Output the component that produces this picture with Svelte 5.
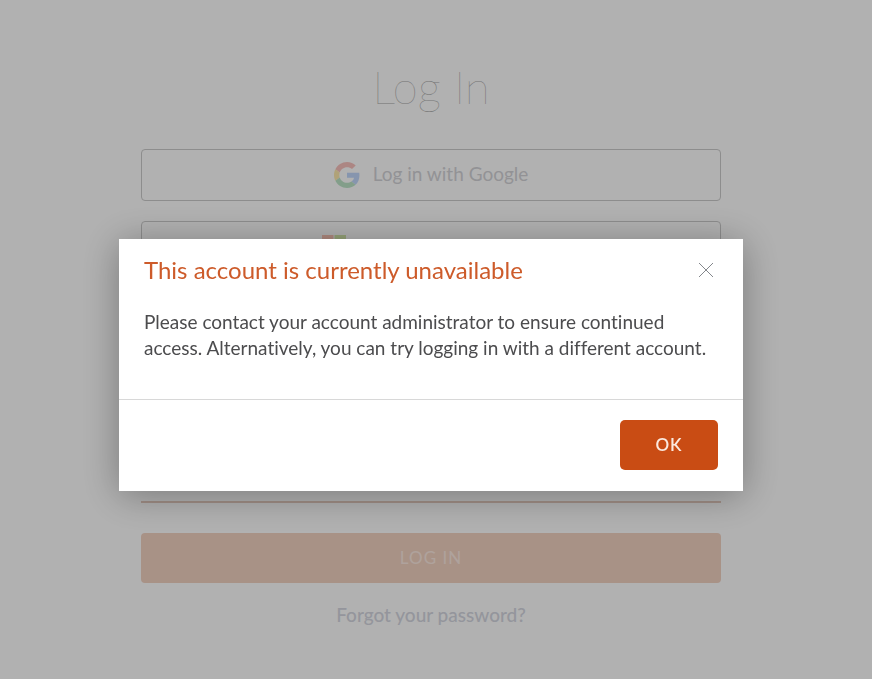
<script lang="ts">
  let open = $state(true)
  let password = $state('')

  function close() {
    open = false
  }
</script>

<main>
  <h1>Log In</h1>
  <form onsubmit={(e) => e.preventDefault()}>
    <button type="button" class="provider">
      <svg class="google" viewBox="0 0 48 48" aria-hidden="true">
        <path fill="#ea4335" d="M24 9.5c3.54 0 6.71 1.22 9.21 3.6l6.85-6.85C35.9 2.38 30.47 0 24 0 14.62 0 6.51 5.38 2.56 13.22l7.98 6.19C12.43 13.72 17.74 9.5 24 9.5z" />
        <path fill="#4285f4" d="M46.98 24.55c0-1.57-.15-3.09-.38-4.55H24v9.02h12.94c-.58 2.96-2.26 5.48-4.78 7.18l7.73 6c4.51-4.18 7.09-10.36 7.09-17.65z" />
        <path fill="#fbbc05" d="M10.53 28.59c-.48-1.45-.76-2.99-.76-4.59s.27-3.14.76-4.59l-7.98-6.19C.92 16.46 0 20.12 0 24c0 3.88.92 7.54 2.56 10.78l7.97-6.19z" />
        <path fill="#34a853" d="M24 48c6.48 0 11.93-2.13 15.89-5.81l-7.73-6c-2.15 1.45-4.92 2.3-8.16 2.3-6.26 0-11.57-4.22-13.47-9.91l-7.98 6.19C6.51 42.62 14.62 48 24 48z" />
      </svg>
      <span>Log in with Google</span>
    </button>
    <button type="button" class="provider microsoft" aria-label="Log in with Microsoft">
      <svg viewBox="0 0 24 24" aria-hidden="true">
        <path fill="#f25022" d="M0 0h11.5v11.5H0z" />
        <path fill="#7fba00" d="M12.5 0H24v11.5H12.5z" />
        <path fill="#00a4ef" d="M0 12.5h11.5V24H0z" />
        <path fill="#ffb900" d="M12.5 12.5H24V24H12.5z" />
      </svg>
    </button>
    <input type="password" aria-label="Password" bind:value={password} />
    <button type="submit" class="submit">LOG IN</button>
  </form>
  <a href="#forgot">Forgot your password?</a>
</main>

{#if open}
  <div class="overlay">
    <div class="modal" role="dialog" aria-modal="true" aria-labelledby="modal-title">
      <header>
        <h2 id="modal-title">This account is currently unavailable</h2>
        <button type="button" class="close" aria-label="Close" onclick={close}>
          <svg viewBox="0 0 16 16" aria-hidden="true">
            <path d="M1 1l14 14M15 1L1 15" />
          </svg>
        </button>
      </header>
      <p>
        Please contact your account administrator to ensure continued access. Alternatively, you can
        try logging in with a different account.
      </p>
      <footer>
        <button type="button" class="ok" onclick={close}>OK</button>
      </footer>
    </div>
  </div>
{/if}

<style>
  :global(body) {
    background: #fefefe;
    font-family: Lato, 'Open Sans', sans-serif;
    font-variant-ligatures: none;
  }

  main {
    align-items: center;
    box-sizing: border-box;
    display: flex;
    flex-direction: column;
    min-height: 100vh;
    padding: 59px 20px 40px 10px;
  }

  h1 {
    color: #a8a8a8;
    font-size: 46px;
    font-weight: 100;
    line-height: 56px;
    margin: 0 0 34px;
  }

  form {
    display: flex;
    flex-direction: column;
    max-width: 580px;
    width: 100%;
  }

  button {
    cursor: pointer;
    font-family: inherit;
  }

  .provider {
    align-items: center;
    background: none;
    border: 1px solid #cacaca;
    border-radius: 4px;
    color: #d2d2d6;
    display: flex;
    font-size: 19px;
    gap: 13px;
    height: 52px;
    justify-content: center;
    margin-bottom: 20px;
    padding: 0 16px;
  }

  .provider span {
    line-height: 24px;
    padding-bottom: 2px;
  }

  .provider svg {
    height: 26px;
    opacity: 0.32;
    width: 26px;
  }

  .microsoft {
    padding-right: 210px;
  }

  .microsoft svg {
    height: 24px;
    width: 24px;
  }

  input {
    background: none;
    border: 0;
    border-bottom: 2px solid #e4cbbf;
    box-sizing: border-box;
    font: inherit;
    height: 50px;
    margin: 160px 0 30px;
    outline: 0;
    padding: 0 10px;
  }

  .submit {
    background: #f1d1c1;
    border: 0;
    border-radius: 4px;
    color: #fbe9e0;
    font-size: 17px;
    height: 50px;
    letter-spacing: 1px;
    padding: 0 6px 2px;
  }

  a {
    color: #d4d6e0;
    font-size: 19px;
    font-weight: 500;
    line-height: 26px;
    margin-top: 19px;
    text-decoration: none;
  }

  .overlay {
    align-items: flex-start;
    background: rgba(0, 0, 0, 0.3);
    box-sizing: border-box;
    display: flex;
    inset: 0;
    justify-content: center;
    padding: 239px 20px 20px 10px;
    position: fixed;
  }

  .modal {
    background: #fff;
    box-shadow: 0 4px 36px rgba(0, 0, 0, 0.32);
    max-width: 624px;
    width: 100%;
  }

  header {
    align-items: center;
    display: flex;
    justify-content: space-between;
    padding: 15px 24px 0 25px;
  }

  h2 {
    color: #cd5b2a;
    font-size: 24px;
    font-weight: 400;
    line-height: 32px;
    margin: 0;
  }

  .close {
    background: none;
    border: 0;
    display: flex;
    padding: 5px;
  }

  .close svg {
    fill: none;
    height: 16px;
    stroke: #84878c;
    width: 16px;
  }

  p {
    color: #4c4c4e;
    font-size: 19px;
    line-height: 26px;
    margin: 0;
    padding: 23px 24px 38px 25px;
  }

  footer {
    border-top: 1px solid #d8d8d8;
    display: flex;
    justify-content: flex-end;
    padding: 20px 25px 21px;
  }

  .ok {
    background: #c94c14;
    border: 0;
    border-radius: 5px;
    color: #fbe9df;
    font-size: 17px;
    font-weight: 600;
    height: 50px;
    letter-spacing: 1px;
    padding: 0 6px 2px;
    width: 98px;
  }
</style>
